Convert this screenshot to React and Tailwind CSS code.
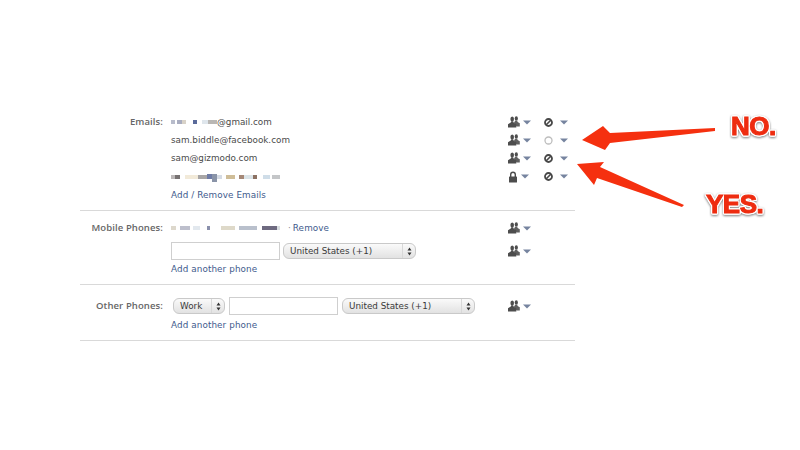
const sans = "font-['DejaVu_Sans',sans-serif]";

function Pixels({ items, className = "" }) {
  return (
    <span className={`flex items-center blur-[0.4px] ${className}`}>
      {items.map((c, i) => (
        <span key={i} className={c} />
      ))}
    </span>
  );
}

function People() {
  return (
    <svg width="12" height="12" viewBox="0 0 12 12" fill="#4d4d4d">
      <ellipse cx="8.300" cy="2.400" rx="1.600" ry="2.200" />
      <path d="M7.400 4.500h1.800l.4 1.400 2.200 1.400v3.200H8.500L6 6.500z" fill="#5f5f5f" />
      <ellipse cx="4.200" cy="2.900" rx="1.800" ry="2.500" />
      <path d="M3.300 5.200h1.800l.5 1.300 2.700 1.800v3.200H0V8.300l2.800-1.800z" />
    </svg>
  );
}

function Lock() {
  return (
    <svg width="10" height="12" viewBox="0 0 10 12" fill="#4d4d4d">
      <path d="M2.700 6V3.600a2.300 2.300 0 0 1 4.600 0V6" fill="none" stroke="#4d4d4d" strokeWidth="1.400" />
      <rect x="1" y="5.500" width="8" height="6" rx=".6" />
    </svg>
  );
}

function Caret() {
  return (
    <svg width="8" height="5" viewBox="0 0 8 5">
      <path d="M0 .5h8L4 4.500z" fill="#76849f" />
    </svg>
  );
}

function Ban({ off }) {
  return (
    <svg width="9" height="9" viewBox="0 0 9 9" fill="none">
      <circle cx="4.500" cy="4.500" r="3.500" stroke={off ? "#bdbdbd" : "#484848"} strokeWidth={off ? 1.300 : 1.800} />
      {!off && <path d="M2 7l5-5" stroke="#484848" strokeWidth="1.600" />}
    </svg>
  );
}

function Audience({ lock }) {
  return (
    <span className="flex items-center gap-[3px] w-[24px]">
      {lock ? <Lock /> : <People />}
      <Caret />
    </span>
  );
}

function Visibility({ off }) {
  return (
    <span className="flex items-center gap-[7px] ml-[12px]">
      <Ban off={off} />
      <Caret />
    </span>
  );
}

function Select({ label, className }) {
  return (
    <div className={`h-[16px] rounded-[6px] border border-[#c9c9c9] bg-gradient-to-b from-[#fafafa] to-[#e2e2e2] flex items-center justify-between text-[#3a3a3a] pl-[6px] pr-[3px] ${className}`}>
      <span>{label}</span>
      <span className="flex items-center h-full border-l border-[#d8d8d8] pl-[4px]">
        <svg width="5" height="9" viewBox="0 0 5 9" fill="#333">
          <path d="M2.500 .5L4.500 3.500H.5zM2.500 8.500L.5 5.500h4z" />
        </svg>
      </span>
    </div>
  );
}

function Row({ label, children, right, className = "h-[18px]" }) {
  return (
    <div className={`flex items-center ${className}`}>
      <div className="w-[83px] text-right font-semibold text-[9.500px] tracking-[0.1px] text-[#666] shrink-0 font-['Open_Sans',sans-serif]">{label}</div>
      <div className="flex-1 ml-[8px] flex items-center min-w-0">{children}</div>
      <div className="w-[67px] shrink-0 flex items-center">{right}</div>
    </div>
  );
}

const gmailPixels = [
  "w-[4px] h-[4px] bg-[#b8bccb]", "w-[2px] h-[4px] bg-white", "w-[5px] h-[4px] bg-[#a9adc0]", "w-[4px] h-[4px] bg-[#d8d2c8]", "w-[7px] h-[4px] bg-white",
  "w-[4px] h-[4px] bg-[#5a6a9a]", "w-[5px] h-[4px] bg-white", "w-[6px] h-[4px] bg-[#dfe6ec]", "w-[9px] h-[4px] bg-[#b9b7b4]",
];
const hiddenPixels = [
  "w-[4px] h-[4px] bg-[#bcb8b8]", "w-[5px] h-[4px] bg-[#777272]", "w-[5px] h-[4px] bg-white", "w-[13px] h-[4px] bg-[#f2ead9]",
  "w-[9px] h-[4px] bg-[#a8a6a6]", "w-[5px] h-[5px] bg-[#6f7ca6]", "w-[5px] h-[8px] mt-[3px] bg-[#8a94a8]", "w-[5px] h-[4px] bg-[#d5dbe4]", "w-[4px] h-[4px] bg-white",
  "w-[9px] h-[4px] bg-[#cfbd98]", "w-[4px] h-[4px] bg-white", "w-[5px] h-[4px] bg-[#a58877]", "w-[9px] h-[4px] bg-[#dbe4e8]", "w-[4px] h-[4px] bg-[#8c7263]",
  "w-[6px] h-[4px] bg-white", "w-[7px] h-[4px] bg-[#cfdde8]", "w-[2px] h-[4px] bg-white", "w-[8px] h-[4px] bg-[#c4c6c8]",
];
const phonePixels = [
  "w-[5px] h-[4px] bg-[#ddd8cc]", "w-[4px] h-[4px] bg-white", "w-[10px] h-[4px] bg-[#bdbfcc]", "w-[3px] h-[4px] bg-white", "w-[7px] h-[4px] bg-[#e2e8ee]",
  "w-[7px] h-[4px] bg-white", "w-[3px] h-[4px] bg-[#8a90ac]", "w-[11px] h-[4px] bg-white", "w-[14px] h-[4px] bg-[#ded9c9]", "w-[4px] h-[4px] bg-white",
  "w-[18px] h-[4px] bg-[#b9c0cc]", "w-[5px] h-[4px] bg-white", "w-[15px] h-[4px] bg-[#6e6a80]", "w-[3px] h-[4px] bg-[#d8dde0]",
];

const link = "text-[#3e5a8c] tracking-[0.1px]";
const input = "h-[18px] border border-[#cfcfcf] bg-white";
const callout = "absolute text-[26px] leading-[26px] font-bold text-[#ee2c10] font-['Liberation_Sans',sans-serif] tracking-[-0.5px] [-webkit-text-stroke:1px_#ee2c10] [filter:drop-shadow(1px_0_0_#fff)_drop-shadow(-1px_0_0_#fff)_drop-shadow(0_1px_0_#fff)_drop-shadow(0_-1px_0_#fff)_drop-shadow(0_1px_1px_rgba(0,0,0,0.5))]";

export default function App() {
  return (
    <div className={`relative w-[800px] h-[450px] overflow-hidden bg-white text-[8.800px] leading-none text-[#4a4a4a] pl-[80px] pt-[113px] ${sans}`}>
      <div className="w-[495px]">
        <section className="h-[98px] border-b border-[#d9d9d9]">
          <Row label="Emails:" right={<><Audience /><Visibility /></>}>
            <Pixels items={gmailPixels} />
            <span>@gmail.com</span>
          </Row>
          <Row label="" right={<><Audience /><Visibility off /></>}>sam.biddle@facebook.com</Row>
          <Row label="" right={<><Audience /><Visibility /></>}>sam@gizmodo.com</Row>
          <Row label="" className="h-[19px]" right={<><Audience lock /><Visibility /></>}>
            <Pixels items={hiddenPixels} />
          </Row>
          <Row label=""><span className={link}>Add / Remove Emails</span></Row>
        </section>

        <section className="h-[74px] border-b border-[#d9d9d9] pt-[8px]">
          <Row label="Mobile Phones:" right={<Audience />}>
            <Pixels items={phonePixels} />
            <span className="ml-[8px] text-[#888]">·</span>
            <span className={`ml-[2px] ${link}`}>Remove</span>
          </Row>
          <Row label="" className="h-[22px] mt-[3px]" right={<Audience />}>
            <div className={`${input} w-[109px]`} />
            <Select label="United States (+1)" className="w-[133px] ml-[3px]" />
          </Row>
          <Row label="" className="h-[14px]"><span className={link}>Add another phone</span></Row>
        </section>

        <section className="h-[56px] border-b border-[#d9d9d9] pt-[11px]">
          <Row label="Other Phones:" className="h-[20px]" right={<Audience />}>
            <Select label="Work" className="w-[52px] ml-[2px]" />
            <div className={`${input} w-[109px] ml-[4px]`} />
            <Select label="United States (+1)" className="w-[133px] ml-[4px]" />
          </Row>
          <Row label=""><span className={link}>Add another phone</span></Row>
        </section>
      </div>

      <svg className="absolute left-0 top-0" width="800" height="450" viewBox="0 0 800 450">
        <path d="M582 140L603 126L610 133L715 128L715 131L610 143L605 150Z" fill="#f5300f" />
        <path d="M577 164L604 162L600 167L684 205L682 207L597 178L594 185Z" fill="#f5300f" />
      </svg>
      <span className={`${callout} left-[731px] top-[113px]`}>NO.</span>
      <span className={`${callout} left-[706px] top-[191px]`}>YES.</span>
    </div>
  );
}
